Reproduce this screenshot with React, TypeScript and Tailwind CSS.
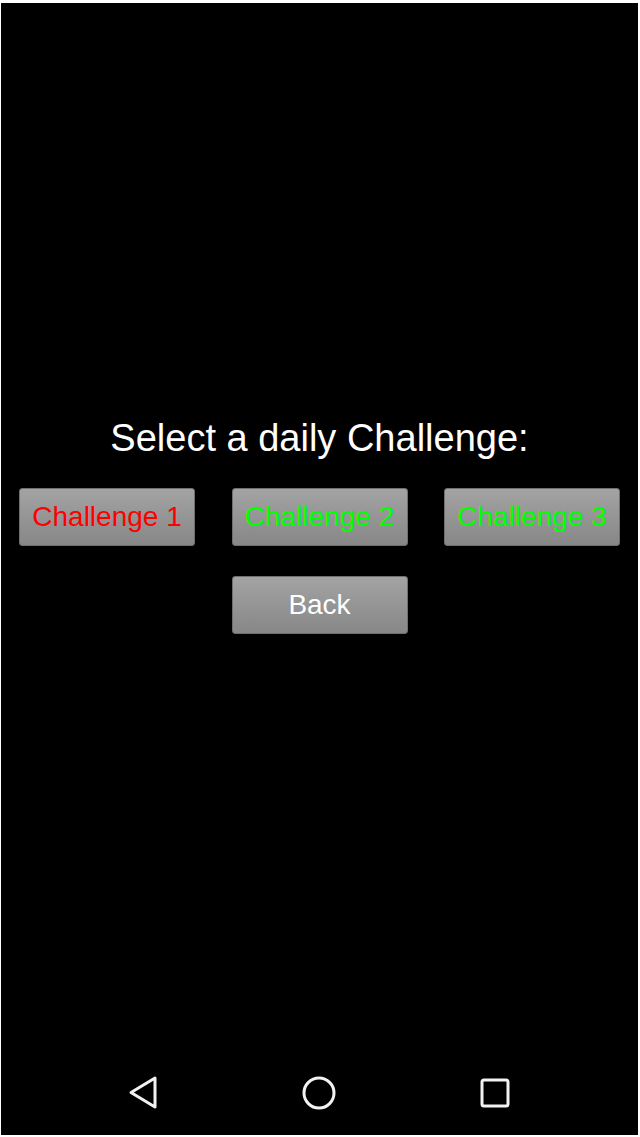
import React from "react";

function Btn({ label, color }: { label: string; color: string }) {
  return (
    <div
      className={`w-[176px] h-[58px] rounded-[3px] bg-gradient-to-b from-[#a3a3a3] to-[#878787] border border-[#6f6f6f] flex items-center justify-center text-[28px] leading-none ${color}`}
      style={{ fontFamily: '"Liberation Sans", Arial, sans-serif' }}
    >
      {label}
    </div>
  );
}

export default function App() {
  return (
    <div className="w-[640px] h-[1137px] bg-white pt-[3px] pl-[1px] pr-[2px] pb-[2px]">
      <div className="w-full h-full bg-black flex flex-col" style={{ fontFamily: '"Liberation Sans", Arial, sans-serif' }}>
        <div className="h-[415px]" />
        <div className="text-white text-[38px] leading-[40px] text-center">Select a daily Challenge:</div>
        <div className="h-[30px]" />
        <div className="flex justify-between pl-[18px] pr-[18px]">
          <Btn label="Challenge 1" color="text-[#ff0000]" />
          <Btn label="Challenge 2" color="text-[#00ff00]" />
          <Btn label="Challenge 3" color="text-[#00ff00]" />
        </div>
        <div className="h-[30px]" />
        <div className="flex justify-center">
          <Btn label="Back" color="text-white" />
        </div>
        <div className="flex-1" />
        <div className="h-[84px] flex items-center justify-between pl-[126px] pr-[127px]">
          <svg width="32" height="36" viewBox="0 0 32 36">
            <path d="M28 3 L4 17.5 L28 32 Z" fill="none" stroke="#f2f2f2" strokeWidth="3" strokeLinejoin="round" />
          </svg>
          <svg width="36" height="36" viewBox="0 0 36 36">
            <circle cx="18" cy="18" r="15" fill="none" stroke="#f2f2f2" strokeWidth="3" />
          </svg>
          <svg width="32" height="32" viewBox="0 0 32 32">
            <rect x="3" y="3" width="26" height="26" rx="2" fill="none" stroke="#f2f2f2" strokeWidth="3" />
          </svg>
        </div>
      </div>
    </div>
  );
}
